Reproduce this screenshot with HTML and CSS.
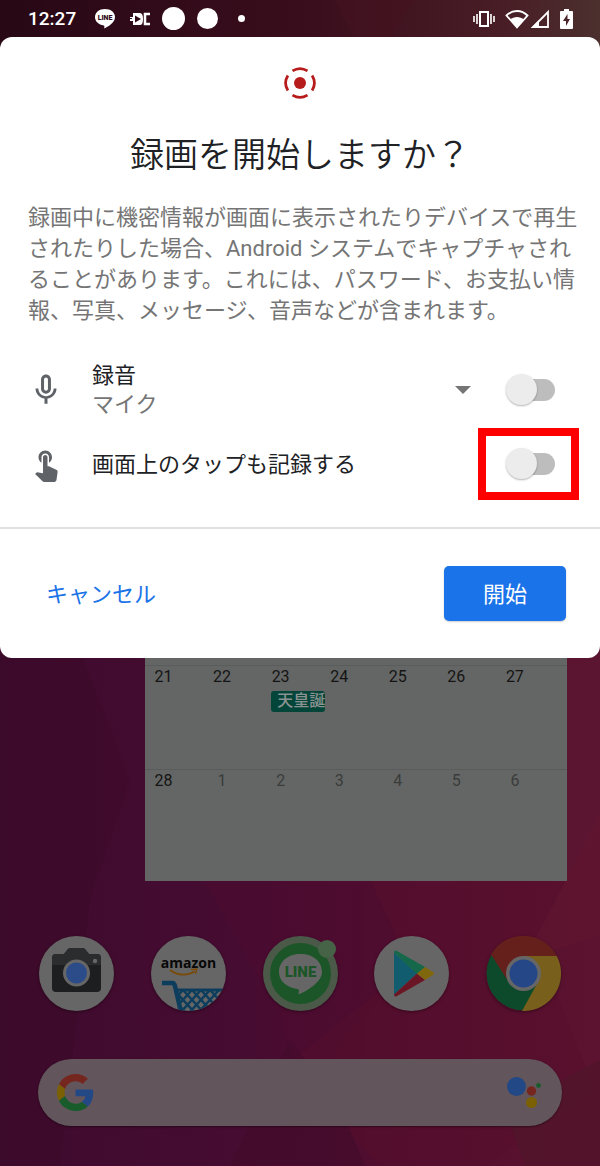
FILE: index.html
```html
<!DOCTYPE html>
<html lang="ja">
<head>
    <meta charset="UTF-8">
    <meta name="viewport" content="width=device-width, initial-scale=1.0">
    <title>録画を開始しますか？</title>
    <link rel="stylesheet" href="styles.css">
</head>
<body>

    <!-- Wallpaper -->
    <svg class="wallpaper" viewBox="0 0 600 1166" preserveAspectRatio="none" aria-hidden="true">
        <defs>
            <linearGradient id="base" x1="0" y1="0" x2="1" y2="0">
                <stop offset="0" stop-color="#3d0b2d"/>
                <stop offset="0.4" stop-color="#460c31"/>
                <stop offset="0.7" stop-color="#540e2e"/>
                <stop offset="1" stop-color="#5b132f"/>
            </linearGradient>
            <linearGradient id="top" x1="0" y1="0" x2="1" y2="0">
                <stop offset="0" stop-color="#280815"/>
                <stop offset="0.5" stop-color="#390d1c"/>
                <stop offset="0.85" stop-color="#491e26"/>
                <stop offset="1" stop-color="#4b302e"/>
            </linearGradient>
        </defs>
        <rect width="600" height="1166" fill="url(#base)"/>
        <rect width="600" height="60" fill="url(#top)"/>
        <path d="M335 0h78l-22 40h-36z" fill="#441320" opacity=".6"/>
        <path d="M0 650h80l50 130L90 900 60 1166H0z" fill="#3c0a29" opacity=".4"/>
        <path d="M205 881h165l40 85-110 120-20-70z" fill="#4d0c30" opacity=".6"/>
        <path d="M370 881h195l-30 60 60 150-110 75H380l-95-100 125-100z" fill="#560d2c" opacity=".5"/>
        <path d="M567 650h33v170l-33 60z" fill="#5c1530"/>
        <path d="M600 815v120l-60 20 -5-16z" fill="#601630" opacity=".6"/>
        <path d="M290 1040l-60 126h135l-25-60z" fill="#430b2c" opacity=".6"/>
        <path d="M600 1060l-95 50 20 56h75z" fill="#51152a" opacity=".8"/>
    </svg>

    <header class="status-bar">
        <time class="clock">12:27</time>
        <div class="notifications">
            <svg width="22" height="22" viewBox="0 0 22 22" aria-hidden="true">
                <path d="M11 1C5.200 1 1 4.500 1 9.300c0 4 3.400 7.400 8.800 8.200.8.2.6 1.300.4 3 3.600-1.500 10.800-5.700 10.800-11.200C21 4.500 16.800 1 11 1z" fill="#fff"/>
                <text class="line-tiny" x="11" y="12" text-anchor="middle">LINE</text>
            </svg>
            <svg class="dc" width="20" height="14" viewBox="0 0 20 14" aria-hidden="true">
                <path d="M0 5h3V1h7c2 0 3 2 3 6s-1 6-3 6H3V9H0V7h2V6H0z" fill="#fff"/>
                <path d="M5 3.500l6 3.500-6 3.500z" fill="#300a18"/>
                <path d="M20 2h-5v10h5" fill="none" stroke="#fff" stroke-width="2.500"/>
            </svg>
            <span class="disc disc-large"></span>
            <span class="disc"></span>
            <span class="disc disc-dot"></span>
        </div>
        <div class="system-icons">
            <svg width="22" height="18" viewBox="0 0 22 18" fill="none" stroke="#fff" aria-hidden="true">
                <path d="M7 2h8v14H7z" stroke-width="2"/>
                <path d="M4 4v10M18 4v10" stroke-width="1.600"/>
                <path d="M1 6v6M21 6v6" stroke-width="1.600"/>
            </svg>
            <svg class="wifi" width="24" height="20" viewBox="0 0 24 20" aria-hidden="true">
                <path d="M1.500 6.500C7.500.5 16.500.5 22.500 6.500L12 18.500z" fill="none" stroke="#fff" stroke-width="1.800"/>
                <path d="M5 10.500C9 7 15 7 19 10.500L12 18.500z" fill="#fff"/>
            </svg>
            <svg width="20" height="20" viewBox="0 0 20 20" aria-hidden="true">
                <path d="M18 3v15H3z" fill="none" stroke="#fff" stroke-width="1.800"/>
                <path d="M1 19L9 11v8z" fill="#fff"/>
            </svg>
            <svg class="battery" width="13" height="20" viewBox="0 0 13 20" aria-hidden="true">
                <path d="M4 0h5v2h3q1 0 1 1v16q0 1-1 1H1q-1 0-1-1V3q0-1 1-1h3z" fill="#fff"/>
                <path d="M7.500 5L3 12h3v5l4-7H7.500z" fill="#4b2429"/>
            </svg>
        </div>
    </header>

    <main class="dialog" role="dialog" aria-labelledby="dialog-title">
        <svg class="record-icon" width="32" height="32" viewBox="0 0 32 32" aria-hidden="true">
            <circle cx="16" cy="16" r="6" fill="#b71c1c"/>
            <path d="M8.500 3.900A14.200 14.200 0 0 1 23.500 3.900M28.100 8.500A14.200 14.200 0 0 1 28.100 23.500M23.500 28.100A14.200 14.200 0 0 1 8.500 28.100M3.900 23.500A14.200 14.200 0 0 1 3.900 8.500" fill="none" stroke="#b71c1c" stroke-width="2.800"/>
        </svg>
        <h1 id="dialog-title">録画を開始しますか？</h1>
        <p class="description">録画中に機密情報が画面に表示されたりデバイスで再生されたりした場合、Android システムでキャプチャされることがあります。これには、パスワード、お支払い情報、写真、メッセージ、音声などが含まれます。</p>

        <div class="options">
            <div class="option">
                <svg width="36" height="36" viewBox="0 0 24 24" fill="#5f6368" aria-hidden="true">
                    <path d="M12 14.500c1.800 0 3.300-1.500 3.300-3.300V5c0-1.800-1.500-3.300-3.300-3.300S8.700 3.200 8.700 5v6.200c0 1.800 1.500 3.300 3.300 3.300zm-1.300-9.500c0-.8.6-1.300 1.300-1.300s1.300.5 1.300 1.300v6.200c0 .8-.6 1.300-1.300 1.300s-1.300-.5-1.300-1.300z"/>
                    <path d="M17.100 11c0 3-2.440 5.100-5.100 5.100S6.900 14 6.900 11H5c0 3.410 2.720 6.230 6 6.720V21.200h2v-3.480c3.280-.48 6-3.300 6-6.720z"/>
                </svg>
                <div class="option-text">
                    <label for="audio">録音</label>
                    <select class="source" aria-label="音源">
                        <option>マイク</option>
                    </select>
                </div>
                <svg class="arrow" width="16" height="8" viewBox="0 0 16 8" aria-hidden="true">
                    <path d="M0 0h16L8 8z" fill="#757575"/>
                </svg>
                <div class="toggle">
                    <input type="checkbox" id="audio" class="switch">
                </div>
            </div>
            <div class="option">
                <svg width="36" height="36" viewBox="0 0 24 24" fill="#5f6368" aria-hidden="true">
                    <path d="M9 11.240V7.500C9 6.120 10.120 5 11.500 5S14 6.120 14 7.500v3.740c1.210-.81 2-2.180 2-3.740C16 5.010 13.990 3 11.500 3S7 5.010 7 7.500c0 1.560.79 2.930 2 3.740zm9.840 4.630l-4.540-2.260c-.17-.07-.35-.11-.54-.11H13v-6c0-.83-.67-1.500-1.500-1.500S10 6.670 10 7.500v10.740c-3.600-.76-3.540-.75-3.670-.75-.31 0-.59.13-.79.33l-.79.8 4.940 4.940c.27.27.65.44 1.060.44h6.790c.75 0 1.330-.55 1.440-1.280l.75-5.270c.01-.07.02-.14.02-.2 0-.62-.38-1.160-.91-1.380z"/>
                </svg>
                <div class="option-text">
                    <label for="taps">画面上のタップも記録する</label>
                </div>
                <div class="toggle highlight">
                    <input type="checkbox" id="taps" class="switch">
                </div>
            </div>
        </div>

        <div class="actions">
            <button type="button" class="cancel">キャンセル</button>
            <button type="button" class="start">開始</button>
        </div>
    </main>

    <section class="home">
        <div class="widget">
            <table class="calendar">
                <colgroup>
                    <col><col><col><col><col><col><col>
                    <col class="gutter">
                </colgroup>
                <tr>
                    <td><span>21</span></td>
                    <td><span>22</span></td>
                    <td><span>23</span><div class="event">天皇誕</div></td>
                    <td><span>24</span></td>
                    <td><span>25</span></td>
                    <td><span>26</span></td>
                    <td><span>27</span></td>
                    <td></td>
                </tr>
                <tr class="next-month">
                    <td class="current"><span>28</span></td>
                    <td><span>1</span></td>
                    <td><span>2</span></td>
                    <td><span>3</span></td>
                    <td><span>4</span></td>
                    <td><span>5</span></td>
                    <td><span>6</span></td>
                    <td></td>
                </tr>
            </table>
        </div>

        <nav class="dock">
            <a href="#camera" class="app" aria-label="カメラ">
                <svg viewBox="0 0 75 75">
                    <circle cx="37.500" cy="37.500" r="37.500" fill="#666"/>
                    <path d="M17 18h8l4-5q1-1 3-1h11q2 0 3 1l4 5h8q4 0 4 4v30q0 4-4 4H17q-4 0-4-4V22q0-4 4-4z" fill="#1c1e20"/>
                    <path d="M17 18h8l4-5q1-1 3-1h11q2 0 3 1l4 5h8q4 0 4 4v7H13v-7q0-4 4-4z" fill="#2a2c2e"/>
                    <circle cx="37.500" cy="37" r="13.500" fill="#666"/>
                    <circle cx="37.500" cy="37" r="10.500" fill="#2b4b89"/>
                    <circle cx="56" cy="25" r="2.200" fill="#666"/>
                </svg>
            </a>
            <a href="#amazon" class="app" aria-label="Amazon">
                <svg viewBox="0 0 75 75">
                    <defs>
                        <clipPath id="round"><circle cx="37.500" cy="37.500" r="37.500"/></clipPath>
                        <clipPath id="basket"><path d="M27 54h48v21H30z"/></clipPath>
                    </defs>
                    <circle cx="37.500" cy="37.500" r="37.500" fill="#666"/>
                    <text class="amazon" x="37.500" y="32" text-anchor="middle">amazon</text>
                    <path d="M19 34c8 6 18 6 25 1" fill="none" stroke="#7a4a08" stroke-width="1.800"/>
                    <path d="M40 33.500l6-.5-1.500 5" fill="none" stroke="#7a4a08" stroke-width="1.300"/>
                    <g clip-path="url(#round)" fill="none" stroke="#0d3d5c">
                        <path d="M11 47h11q1 0 2 3l6 26" stroke-width="4.500"/>
                        <path d="M26 54h48" stroke-width="3"/>
                        <path clip-path="url(#basket)" d="M14 54l22 24M23 54l22 24M32 54l22 24M41 54l22 24M50 54l22 24M59 54l22 24M32 54L10 78M41 54L19 78M50 54L28 78M59 54L37 78M68 54L46 78M77 54L55 78" stroke-width="2.400"/>
                    </g>
                </svg>
            </a>
            <a href="#line" class="app" aria-label="LINE">
                <svg viewBox="0 0 75 75">
                    <circle cx="37.500" cy="37.500" r="37.500" fill="#4b5949"/>
                    <circle cx="37.500" cy="37.500" r="30.500" fill="#1c5628"/>
                    <path d="M37.500 18C25 18 16 25.500 16 36c0 9 7.500 15.500 18.500 17 2 .5 1.500 2 1 5.500C44 55 59 46 59 36c0-10.500-9-18-21.500-18z" fill="#666"/>
                    <text class="line-logo" x="37.500" y="41" text-anchor="middle">LINE</text>
                    <circle cx="64" cy="13" r="9" fill="#466247"/>
                </svg>
            </a>
            <a href="#play" class="app" aria-label="Play ストア">
                <svg viewBox="0 0 75 75">
                    <circle cx="37.500" cy="37.500" r="37.500" fill="#666"/>
                    <path d="M20 16.500v42l23-21z" fill="#125c70"/>
                    <path d="M20 16.500q0-3 3-1.500l28 16-8 7z" fill="#16684a"/>
                    <path d="M20 58.500q0 3 3 1.500l28-16-8-6.500z" fill="#6b1624"/>
                    <path d="M51 31l8 5q2 1.500 0 3l-8 5-8-6.500z" fill="#80660c"/>
                </svg>
            </a>
            <a href="#chrome" class="app" aria-label="Chrome">
                <svg viewBox="0 0 75 75">
                    <circle cx="37.500" cy="37.500" r="37" fill="#0d4a2b"/>
                    <path d="M5 18.500A37.500 37.500 0 0 1 70.700 20H37.500L22 45z" fill="#65201b"/>
                    <path d="M37.500 20h33.200A37.500 37.500 0 0 1 36 75L52 46z" fill="#78601c"/>
                    <circle cx="37.500" cy="37.500" r="17.500" fill="#666"/>
                    <circle cx="37.500" cy="37.500" r="14" fill="#254788"/>
                </svg>
            </a>
        </nav>

        <a href="#search" class="search" aria-label="Google 検索">
            <svg width="37" height="37" viewBox="0 0 48 48">
                <path fill="#75271f" d="M24 9.500c3.540 0 6.710 1.220 9.210 3.600l6.850-6.850C35.900 2.380 30.470 0 24 0 14.620 0 6.510 5.380 2.560 13.220l7.980 6.190C12.430 13.720 17.740 9.500 24 9.500z"/>
                <path fill="#234886" d="M47 24.550c0-1.570-.15-3.090-.38-4.550H24v9.020h12.940c-.58 2.960-2.260 5.480-4.780 7.180l7.730 6C44.400 38.020 47 31.840 47 24.550z"/>
                <path fill="#7c6004" d="M10.530 28.590c-.48-1.450-.76-2.990-.76-4.590s.27-3.140.76-4.590l-7.980-6.190C.92 16.460 0 20.120 0 24c0 3.880.92 7.540 2.560 10.780z"/>
                <path fill="#195c2c" d="M24 48c6.480 0 11.930-2.130 15.890-5.810l-7.730-6c-2.150 1.450-4.920 2.300-8.160 2.300-6.260 0-11.570-4.220-13.470-9.910l-7.980 6.190C6.510 42.620 14.620 48 24 48z"/>
            </svg>
            <svg width="34" height="32" viewBox="0 0 34 32">
                <circle cx="9.500" cy="9.500" r="9.500" fill="#234886"/>
                <circle cx="24.500" cy="14" r="4.700" fill="#75271f"/>
                <circle cx="24.500" cy="25.500" r="5.500" fill="#7c6004"/>
                <circle cx="31.500" cy="8.500" r="2.400" fill="#195c2c"/>
            </svg>
        </a>
    </section>

</body>
</html>
```
FILE: styles.css
```css
* {
    box-sizing: border-box;
}
body {
    position: relative;
    margin: 0;
    min-height: 100vh;
    background-color: #460c31;
    font-family: Roboto, "Noto Sans CJK JP", sans-serif;
    font-size: 22px;
    color: #202124;
}
svg {
    display: block;
    flex: none;
}
.wallpaper {
    position: absolute;
    top: 0;
    left: 0;
    width: 100%;
    height: 100%;
    z-index: -1;
}

/* Status bar */
.status-bar {
    display: flex;
    align-items: center;
    height: 37px;
    padding: 0 27px 0 28px;
    color: white;
}
.clock {
    font-size: 19px;
    font-weight: 500;
    line-height: 24px;
}
.notifications {
    display: flex;
    align-items: center;
    gap: 12px;
    margin-left: 18px;
}
.dc {
    margin-left: 2px;
}
.disc {
    width: 21px;
    height: 21px;
    border-radius: 50%;
    background-color: white;
}
.disc-large {
    width: 23px;
    height: 23px;
}
.disc-dot {
    width: 7px;
    height: 7px;
    margin-left: 8px;
}
.system-icons {
    display: flex;
    align-items: center;
    margin-left: auto;
}
.wifi {
    margin: 0 1px 0 10px;
}
.battery {
    margin-left: 10px;
}
.line-tiny {
    font-size: 7px;
    font-weight: 900;
    fill: #300a18;
}

/* Dialog */
.dialog {
    padding-top: 30px;
    background-color: white;
    border-radius: 12px;
}
.record-icon {
    margin: 0 auto;
}
h1 {
    margin: 30px 28px 25px;
    font-family: "Noto Sans CJK JP", sans-serif;
    font-size: 34px;
    font-weight: 350;
    line-height: 48px;
    text-align: center;
}
.description {
    margin: 0 20px 0 28px;
    line-height: 31px;
    color: #757575;
}
.options {
    display: flex;
    flex-direction: column;
    gap: 16px;
    padding: 35px 45px 34px 28px;
    border-bottom: 2px solid #e0e0e0;
}
.option {
    display: flex;
    align-items: center;
    min-height: 58px;
}
.option-text {
    display: flex;
    flex: 1;
    flex-direction: column;
    margin-left: 28px;
    line-height: 29px;
}
.source {
    appearance: none;
    height: 29px;
    padding: 0;
    border: none;
    background: none;
    font: inherit;
    color: #757575;
}
.arrow {
    margin-right: 37px;
}
.toggle {
    position: relative;
    display: flex;
}
.switch {
    appearance: none;
    position: relative;
    width: 47px;
    height: 22px;
    margin: 0;
    border-radius: 11px;
    background-color: #bdbdbd;
}
.switch::before {
    content: "";
    position: absolute;
    top: -5px;
    left: -2px;
    width: 31px;
    height: 31px;
    border-radius: 50%;
    background-color: #ececec;
    box-shadow: 0 1px 2px rgba(0, 0, 0, 0.3);
}
.switch:checked {
    background-color: #8ab4f8;
}
.switch:checked::before {
    left: 18px;
    background-color: #1a73e8;
}
.highlight::after {
    content: "";
    position: absolute;
    inset: -25px -24px -25px -30px;
    border: 8px solid #ff0000;
    pointer-events: none;
}
.actions {
    display: flex;
    justify-content: space-between;
    padding: 37px 34px;
}
button {
    height: 55px;
    border: none;
    border-radius: 5px;
    font: inherit;
}
.cancel {
    padding: 0 12px 3px;
    background: none;
    color: #1a73e8;
}
.start {
    padding: 0 39px 3px;
    background-color: #1a73e8;
    color: white;
    box-shadow: 0 1px 2px rgba(0, 0, 0, 0.2);
}

/* Home screen behind the dialog */
.home {
    display: flex;
    flex-direction: column;
    padding-bottom: 40px;
}
.widget {
    margin: 0 33px 0 145px;
    padding-top: 7px;
    background-color: #646665;
}
.calendar {
    width: 100%;
    border-spacing: 0;
    table-layout: fixed;
    font-size: 16px;
    line-height: 20px;
    color: #141414;
}
.calendar td {
    height: 104px;
    padding: 1px 0 0 9px;
    border-top: 1px solid #5a5c5b;
    vertical-align: top;
}
.calendar .gutter {
    width: 12px;
}
.calendar span {
    display: block;
    width: 19px;
    text-align: center;
}
.calendar .next-month td {
    height: 112px;
    color: #3a3c3b;
}
.calendar .next-month .current {
    color: #141414;
}
.event {
    width: 54px;
    height: 21px;
    margin-top: 4px;
    padding-left: 6px;
    border-radius: 3px;
    background-color: #04453a;
    font-weight: 500;
    color: #8b9391;
    white-space: nowrap;
}
.dock {
    display: flex;
    justify-content: space-between;
    margin: 55px 39px 48px;
}
.app {
    width: 75px;
    height: 75px;
    border-radius: 50%;
    box-shadow: 0 1px 3px rgba(0, 0, 0, 0.4);
}
.amazon {
    font-family: "Open Sans", sans-serif;
    font-size: 14px;
    font-weight: 700;
    fill: #080808;
}
.line-logo {
    font-size: 15px;
    font-weight: 900;
    fill: #1c5628;
}
.search {
    display: flex;
    align-items: center;
    justify-content: space-between;
    height: 67px;
    margin: 0 38px;
    padding: 0 21px 0 19px;
    border-radius: 34px;
    background-color: #62565c;
    box-shadow: 0 1px 2px rgba(0, 0, 0, 0.4);
}
```
